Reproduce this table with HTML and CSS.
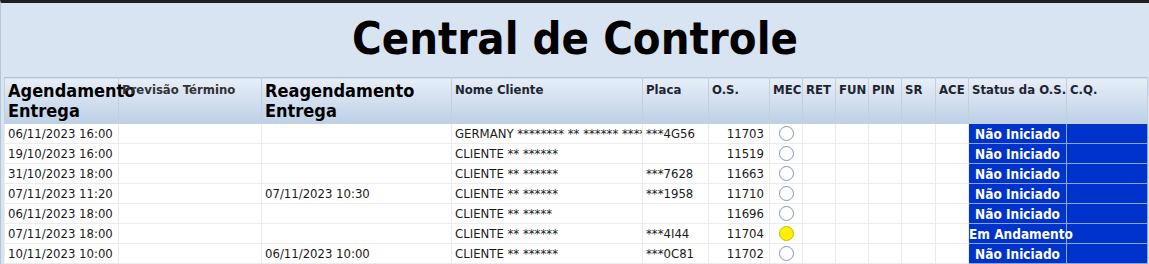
FILE: index.html
```html
<!DOCTYPE html>
<html lang="pt-BR">
<head>
<meta charset="utf-8">
<title>Central de Controle</title>
<link rel="stylesheet" href="styles.css">
</head>
<body>
<div class="page">
  <h1 class="title">Central de Controle</h1>
  <table class="grid">
    <colgroup>
      <col style="width:114px"><col style="width:143px"><col style="width:190px"><col style="width:191px">
      <col style="width:66px"><col style="width:61px"><col style="width:33px"><col style="width:33px">
      <col style="width:33px"><col style="width:33px"><col style="width:34px"><col style="width:33px">
      <col style="width:98px"><col style="width:81px">
    </colgroup>
    <thead>
      <tr class="head">
        <th class="big">Agendamento<br>Entrega</th>
        <th class="gray">Previsão Término</th>
        <th class="big">Reagendamento<br>Entrega</th>
        <th>Nome Cliente</th>
        <th>Placa</th>
        <th>O.S.</th>
        <th>MEC</th>
        <th>RET</th>
        <th>FUN</th>
        <th>PIN</th>
        <th>SR</th>
        <th>ACE</th>
        <th>Status da O.S.</th>
        <th>C.Q.</th>
      </tr>
    </thead>
    <tbody>
      <tr><td>06/11/2023 16:00</td><td></td><td></td><td>GERMANY ******** ** ****** *****</td><td>***4G56</td><td class="num">11703</td><td class="c"><span class="dot"></span></td><td></td><td></td><td></td><td></td><td></td><td class="status">Não Iniciado</td><td class="cq"></td></tr>
      <tr><td>19/10/2023 16:00</td><td></td><td></td><td>CLIENTE ** ******</td><td></td><td class="num">11519</td><td class="c"><span class="dot"></span></td><td></td><td></td><td></td><td></td><td></td><td class="status">Não Iniciado</td><td class="cq"></td></tr>
      <tr><td>31/10/2023 18:00</td><td></td><td></td><td>CLIENTE ** ******</td><td>***7628</td><td class="num">11663</td><td class="c"><span class="dot"></span></td><td></td><td></td><td></td><td></td><td></td><td class="status">Não Iniciado</td><td class="cq"></td></tr>
      <tr><td>07/11/2023 11:20</td><td></td><td>07/11/2023 10:30</td><td>CLIENTE ** ******</td><td>***1958</td><td class="num">11710</td><td class="c"><span class="dot"></span></td><td></td><td></td><td></td><td></td><td></td><td class="status">Não Iniciado</td><td class="cq"></td></tr>
      <tr><td>06/11/2023 18:00</td><td></td><td></td><td>CLIENTE ** *****</td><td></td><td class="num">11696</td><td class="c"><span class="dot"></span></td><td></td><td></td><td></td><td></td><td></td><td class="status">Não Iniciado</td><td class="cq"></td></tr>
      <tr><td>07/11/2023 18:00</td><td></td><td></td><td>CLIENTE ** ******</td><td>***4I44</td><td class="num">11704</td><td class="c"><span class="dot yellow"></span></td><td></td><td></td><td></td><td></td><td></td><td class="status">Em Andamento</td><td class="cq"></td></tr>
      <tr><td>10/11/2023 10:00</td><td></td><td>06/11/2023 10:00</td><td>CLIENTE ** ******</td><td>***0C81</td><td class="num">11702</td><td class="c"><span class="dot"></span></td><td></td><td></td><td></td><td></td><td></td><td class="status">Não Iniciado</td><td class="cq"></td></tr>
    </tbody>
  </table>
</div>
</body>
</html>
```
FILE: styles.css
```css
html, body {
  margin: 0;
  padding: 0;
  height: 100%;
  overflow: hidden;
}
body {
  background: #d8e4f2;
  font-family: "DejaVu Sans Condensed", "DejaVu Sans", sans-serif;
  font-stretch: condensed;
}
.page {
  border-top: 3px solid #1f1f1f;
  border-left: 1px solid #b9c5d3;
  height: 100%;
  box-sizing: border-box;
}
.title {
  margin: 0;
  padding: 8px 0 10px;
  text-align: center;
  font-size: 45px;
  line-height: 56px;
  font-weight: bold;
  color: #000;
}
.grid {
  margin-left: 3px;
  width: 1143px;
  table-layout: fixed;
  border-collapse: collapse;
  background: #fff;
  font-size: 13px;
  color: #1a1a1a;
}
.head {
  height: 46px;
}
.head th {
  background: linear-gradient(#e7eef7, #bdd0e7);
  border: 1px solid #c4cfdc;
  border-top-color: #b5c2d2;
  text-align: left;
  vertical-align: top;
  padding: 4px 3px 0;
  font-size: 13px;
  line-height: 15px;
  font-weight: bold;
  color: #1d2530;
  white-space: nowrap;
  overflow: visible;
}
.head th.big {
  font-size: 18px;
  line-height: 20px;
  color: #000;
  padding-top: 3px;
}
.head th.gray {
  color: #333;
}
tbody tr {
  height: 20px;
}
tbody td {
  border: 1px solid #ececec;
  padding: 0 3px;
  height: 19px;
  line-height: 18px;
  white-space: nowrap;
  overflow: hidden;
  vertical-align: middle;
}
td.num {
  text-align: right;
  padding-right: 5px;
}
td.c {
  text-align: center;
  padding: 0;
}
.dot {
  display: inline-block;
  width: 13px;
  height: 13px;
  border: 1px solid #8493b8;
  border-radius: 50%;
  background: #fff;
  vertical-align: middle;
  margin-top: -2px;
}
.dot.yellow {
  background: #fff200;
  border-color: #c9b800;
}
td.status {
  background: #0033cc;
  color: #fff;
  font-weight: bold;
  font-size: 13.5px;
  text-align: center;
  padding: 0;
  overflow: visible;
  border-color: #8aa6ea;
}
td.cq {
  background: #0033cc;
  border-color: #8aa6ea;
}
```
